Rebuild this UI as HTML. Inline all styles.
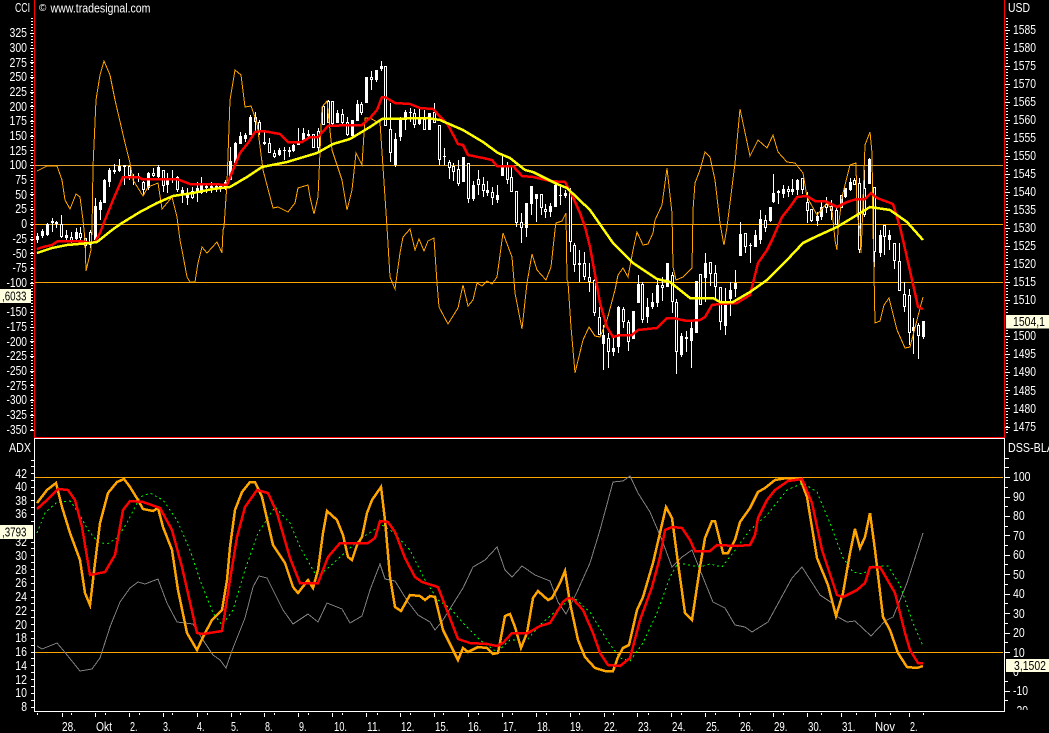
<!DOCTYPE html>
<html><head><meta charset="utf-8"><title>Chart</title>
<style>html,body{margin:0;padding:0;background:#000;overflow:hidden}svg{display:block}text{font-family:"Liberation Sans",sans-serif;font-size:13px;fill:#fff}</style></head>
<body>
<svg width="1049" height="733" viewBox="0 0 1049 733" xmlns="http://www.w3.org/2000/svg">
<rect width="1049" height="733" fill="#000"/>
<g shape-rendering="crispEdges">
<path d="M35 165.5H1003" stroke="#e0a030" fill="none"/>
<path d="M35 224.5H1003M35 282.5H1003M35 477.5H1003M35 652.5H1003" stroke="#ffa500" fill="none"/>
<!-- wicks -->
<path stroke="#fff" fill="none" d="M37.5 233V243M42.5 229V238M47.5 223V236M52.5 218V232M56.5 221V228M61.5 215V238M66.5 230V240M71.5 232V243M76.5 228V240M80.5 227V242M85.5 238V257M90.5 230V248M95.5 198V240M100.5 200V220M104.5 179V203M109.5 168V187M114.5 164V174M119.5 159V172M124.5 165V185M129.5 165V180M133.5 174V185M138.5 173V182M143.5 181V195M148.5 172V190M153.5 168V177M158.5 165V178M163.5 170V192M167.5 173V193M172.5 170V183M177.5 176V192M182.5 187V203M187.5 188V205M192.5 187V199M197.5 182V202M201.5 177V194M206.5 183V193M211.5 182V193M216.5 183V192M220.5 185V192M225.5 180V190M230.5 147V180M235.5 142V163M240.5 132V144M245.5 133V142M250.5 115V135M255.5 112V132M259.5 120V135M264.5 132V145M269.5 138V153M274.5 150V158M279.5 148V156M284.5 147V160M289.5 147V157M293.5 144V152M298.5 128V145M303.5 128V140M308.5 130V138M313.5 134V148M318.5 128V151M323.5 105V125M328.5 100V123M332.5 101V125M337.5 110V123M342.5 109V124M347.5 117V136M352.5 120V136M357.5 100V121M361.5 102V115M366.5 77V103M371.5 71V90M376.5 70V82M381.5 61V71M385.5 66V126M390.5 103V162M395.5 133V167M400.5 117V141M405.5 110V130M410.5 108V122M414.5 109V128M419.5 109V125M424.5 110V130M429.5 113V130M434.5 103V123M439.5 125V165M444.5 148V165M449.5 160V179M453.5 163V181M458.5 160V186M463.5 157V182M468.5 163V203M473.5 181V201M478.5 170V195M483.5 177V197M487.5 181V196M492.5 187V205M497.5 185V203M502.5 155V176M507.5 162V184M511.5 167V192M516.5 191V227M521.5 213V243M526.5 203V237M531.5 186V215M536.5 194V222M541.5 194V215M545.5 204V218M550.5 203V217M555.5 182V207M560.5 186V205M565.5 190V198M570.5 188V252M574.5 243V272M579.5 250V282M584.5 252V280M589.5 263V292M594.5 279V316M599.5 307V335M603.5 325V370M608.5 333V368M613.5 338V356M618.5 306V353M623.5 307V328M628.5 320V351M633.5 311V339M638.5 275V303M642.5 282V323M647.5 298V323M652.5 293V309M657.5 280V307M662.5 277V301M667.5 263V287M672.5 272V313M676.5 299V374M681.5 333V357M686.5 331V352M691.5 320V368M696.5 281V333M700.5 274V305M705.5 253V302M710.5 262V286M715.5 265V298M720.5 287V330M725.5 288V335M730.5 282V316M735.5 270V297M740.5 222V256M745.5 233V253M750.5 243V263M755.5 230V247M760.5 210V244M765.5 215V232M770.5 207V222M773.5 174V203M778.5 190V204M783.5 185V198M788.5 186V197M792.5 179V195M797.5 179V195M802.5 178V194M807.5 192V223M811.5 209V222M817.5 212V226M821.5 202V220M826.5 197V213M831.5 200V220M836.5 208V225M841.5 195V208M845.5 188V198M850.5 178V191M854.5 178V185M859.5 178V253M864.5 170V217M869.5 158V184M874.5 187V267M880.5 230V257M884.5 225V255M889.5 230V250M894.5 243V269M899.5 243V291M904.5 282V312M909.5 289V345M913.5 318V354M918.5 323V359M923.5 321V339"/>
<!-- hollow bodies -->
<path stroke="#fff" fill="#000" d="M60.5 224.5h2V236.5h-2zM70.5 237.5h2V240.5h-2zM79.5 233.5h2V237.5h-2zM84.5 238.5h2V245.5h-2zM89.5 232.5h2V244.5h-2zM128.5 166.5h2V175.5h-2zM142.5 182.5h2V189.5h-2zM152.5 173.5h2V175.5h-2zM162.5 170.5h2V185.5h-2zM176.5 177.5h2V189.5h-2zM191.5 191.5h2V197.5h-2zM254.5 117.5h2V121.5h-2zM258.5 122.5h2V131.5h-2zM268.5 143.5h2V152.5h-2zM273.5 153.5h2V156.5h-2zM312.5 134.5h2V147.5h-2zM317.5 131.5h2V147.5h-2zM322.5 106.5h2V124.5h-2zM327.5 101.5h2V122.5h-2zM331.5 101.5h2V123.5h-2zM341.5 114.5h2V122.5h-2zM346.5 122.5h2V134.5h-2zM360.5 104.5h2V112.5h-2zM370.5 77.5h2V79.5h-2zM384.5 66.5h2V125.5h-2zM389.5 129.5h2V152.5h-2zM413.5 113.5h2V124.5h-2zM423.5 119.5h2V129.5h-2zM433.5 112.5h2V122.5h-2zM438.5 125.5h2V159.5h-2zM448.5 162.5h2V167.5h-2zM452.5 166.5h2V171.5h-2zM457.5 169.5h2V183.5h-2zM467.5 163.5h2V198.5h-2zM477.5 179.5h2V184.5h-2zM482.5 184.5h2V190.5h-2zM491.5 192.5h2V197.5h-2zM506.5 165.5h2V179.5h-2zM510.5 177.5h2V191.5h-2zM515.5 191.5h2V222.5h-2zM520.5 222.5h2V227.5h-2zM540.5 194.5h2V207.5h-2zM544.5 209.5h2V211.5h-2zM569.5 192.5h2V241.5h-2zM573.5 245.5h2V264.5h-2zM583.5 263.5h2V276.5h-2zM588.5 277.5h2V281.5h-2zM593.5 280.5h2V312.5h-2zM598.5 317.5h2V334.5h-2zM607.5 338.5h2V351.5h-2zM622.5 309.5h2V321.5h-2zM627.5 322.5h2V341.5h-2zM641.5 284.5h2V319.5h-2zM661.5 285.5h2V287.5h-2zM671.5 275.5h2V301.5h-2zM675.5 302.5h2V351.5h-2zM685.5 337.5h2V338.5h-2zM699.5 274.5h2V304.5h-2zM709.5 262.5h2V273.5h-2zM714.5 273.5h2V286.5h-2zM719.5 287.5h2V321.5h-2zM744.5 233.5h2V246.5h-2zM764.5 220.5h2V227.5h-2zM787.5 189.5h2V191.5h-2zM801.5 178.5h2V189.5h-2zM806.5 202.5h2V210.5h-2zM810.5 209.5h2V220.5h-2zM825.5 204.5h2V207.5h-2zM830.5 206.5h2V210.5h-2zM835.5 210.5h2V224.5h-2zM840.5 195.5h2V207.5h-2zM853.5 180.5h2V184.5h-2zM858.5 183.5h2V249.5h-2zM863.5 188.5h2V214.5h-2zM873.5 187.5h2V251.5h-2zM883.5 225.5h2V236.5h-2zM893.5 243.5h2V260.5h-2zM898.5 261.5h2V290.5h-2zM903.5 294.5h2V306.5h-2zM908.5 295.5h2V332.5h-2zM917.5 325.5h2V335.5h-2z"/>
<!-- filled bodies -->
<path fill="#fff" d="M36 236h3V240h-3zM41 231h3V236h-3zM46 224h3V235h-3zM51 221h3V223h-3zM55 222h3V224h-3zM65 235h3V238h-3zM75 232h3V239h-3zM94 206h3V240h-3zM99 202h3V210h-3zM103 180h3V203h-3zM108 170h3V182h-3zM113 170h3V172h-3zM118 166h3V171h-3zM123 165h3V167h-3zM132 176h3V178h-3zM137 176h3V178h-3zM147 173h3V188h-3zM157 167h3V177h-3zM166 178h3V185h-3zM171 178h3V180h-3zM181 190h3V195h-3zM186 193h3V198h-3zM196 188h3V192h-3zM200 185h3V193h-3zM205 186h3V188h-3zM210 186h3V188h-3zM215 186h3V188h-3zM219 186h3V188h-3zM224 182h3V188h-3zM229 161h3V180h-3zM234 143h3V163h-3zM239 136h3V144h-3zM244 135h3V139h-3zM249 117h3V135h-3zM263 142h3V144h-3zM278 150h3V155h-3zM283 150h3V151h-3zM288 150h3V152h-3zM292 145h3V151h-3zM297 142h3V145h-3zM302 133h3V140h-3zM307 134h3V136h-3zM336 113h3V123h-3zM351 120h3V136h-3zM356 104h3V121h-3zM365 77h3V103h-3zM375 70h3V80h-3zM380 66h3V69h-3zM394 139h3V165h-3zM399 120h3V137h-3zM404 112h3V120h-3zM409 112h3V113h-3zM418 118h3V124h-3zM428 113h3V130h-3zM443 156h3V157h-3zM462 157h3V182h-3zM472 185h3V199h-3zM486 190h3V193h-3zM496 195h3V200h-3zM501 167h3V176h-3zM525 203h3V228h-3zM530 186h3V204h-3zM535 194h3V199h-3zM549 206h3V212h-3zM554 185h3V207h-3zM559 195h3V196h-3zM564 193h3V196h-3zM578 263h3V265h-3zM602 335h3V344h-3zM612 348h3V352h-3zM617 307h3V347h-3zM632 311h3V339h-3zM637 284h3V303h-3zM646 307h3V317h-3zM651 302h3V307h-3zM656 285h3V303h-3zM666 263h3V287h-3zM680 336h3V355h-3zM690 328h3V341h-3zM695 281h3V333h-3zM704 263h3V278h-3zM724 304h3V326h-3zM729 290h3V299h-3zM734 283h3V289h-3zM739 234h3V256h-3zM749 245h3V246h-3zM754 235h3V247h-3zM759 219h3V240h-3zM769 207h3V221h-3zM772 193h3V202h-3zM777 191h3V193h-3zM782 189h3V194h-3zM791 189h3V192h-3zM796 180h3V190h-3zM816 216h3V221h-3zM820 207h3V217h-3zM844 188h3V197h-3zM849 182h3V190h-3zM868 159h3V184h-3zM879 235h3V253h-3zM888 235h3V240h-3zM912 327h3V331h-3zM922 321h3V337h-3z"/>
<!-- CCI thin -->
<polyline fill="none" stroke="#ffa500" points="37,171 47,166 57,166 62,180 65,200 70,209 76,194 80,197 83,220 85,240 86,271 91,250 92,230 93,167 96,100 100,75 104,61 110,75 115,100 125,143 130,163 133,180 143,196 148,187 158,183 162,209 172,197 177,217 180,240 182,250 187,277 190,282 195,282 198,263 202,247 207,253 217,242 222,253 223,230 224,227 227,183 230,100 235,70 241,75 245,107 251,106 257,123 263,170 273,208 278,207 288,212 295,203 298,188 308,185 310,197 314,214 318,197 322,107 327,101 332,150 342,180 347,210 352,190 356,153 362,165 365,118 370,118 377,122 380,122 383,167 387,227 390,277 395,289 400,253 403,237 410,229 415,250 419,239 424,251 428,241 434,238 437,283 439,307 448,324 458,308 463,285 468,306 473,300 477,283 482,286 487,281 492,284 497,277 503,233 512,257 515,293 522,329 527,283 532,254 537,270 546,280 551,267 555,230 556,223 562,221 566,213 567,280 568,282 571,327 575,373 583,340 589,327 595,336 600,337 607,320 615,290 618,275 623,268 628,277 633,250 637,232 643,245 648,244 653,233 655,220 662,205 667,168 672,213 673,267 676,280 683,277 692,268 693,210 695,183 700,170 705,152 710,157 715,180 720,223 723,240 724,245 727,227 735,163 740,109 750,156 758,140 767,148 773,135 778,152 787,162 795,163 803,173 807,197 817,215 827,203 832,210 835,240 837,250 838,230 842,197 850,165 856,163 857,213 860,230 861,253 862,230 865,145 870,132 872,153 873,227 874,273 875,323 880,321 884,305 889,298 897,330 905,348 910,347 917,320 923,297"/>
<!-- red MA -->
<polyline fill="none" stroke="#ff0000" stroke-width="2.5" points="37,249 43,247 52,245 58,241 80,241 90,243 95,242 100,233 103,225 113,200 123,177 138,177 142,179 177,179 190,184 213,184 227,185 233,170 240,153 248,143 255,132 263,131 280,134 288,142 302,142 310,137 318,137 328,126 350,125 362,125 370,118 377,110 382,97 385,97 395,103 410,104 420,108 433,109 448,125 458,144 463,145 468,155 483,158 492,160 497,166 513,166 522,176 533,177 550,181 565,182 572,195 580,213 585,227 590,247 596,280 600,303 607,327 613,337 620,335 632,335 638,330 647,329 657,328 667,318 673,318 687,321 700,320 705,317 712,305 720,304 737,303 750,295 758,263 767,250 772,240 782,217 790,207 797,197 807,196 815,201 825,201 837,207 847,202 857,199 865,199 871,193 877,198 893,204 900,227 903,240 917,302 918,307 923,309"/>
<!-- yellow MA -->
<polyline fill="none" stroke="#ffff00" stroke-width="2.5" points="37,253 52,248 67,245 90,243 97,242 112,230 122,223 140,212 157,203 173,196 193,193 213,189 230,187 247,177 262,167 287,162 317,153 333,144 350,139 360,133 370,127 382,119 428,118 440,120 463,130 483,142 498,153 510,158 525,170 533,172 557,184 567,188 590,210 613,243 633,263 657,279 670,282 690,298 700,298 713,298 720,302 733,302 750,292 767,280 787,260 803,243 813,238 837,227 857,215 870,207 890,210 907,222 923,240"/>
<!-- gray -->
<polyline fill="none" stroke="#808080" points="37,646 42,649 57,643 63,650 80,671 92,669 100,658 110,627 120,602 130,588 138,582 145,584 158,579 167,603 177,622 193,624 203,640 213,655 220,660 226,668 233,648 245,618 253,587 259,576 267,578 283,610 293,624 308,614 318,622 327,603 342,609 350,623 362,616 370,590 380,564 385,579 395,581 408,602 418,615 430,622 435,630 443,620 463,588 473,567 485,560 497,547 505,570 512,577 522,566 535,575 550,581 558,602 566,614 577,592 590,563 600,530 613,482 623,481 630,476 638,493 650,512 662,540 672,567 682,557 692,550 700,570 713,602 725,608 735,625 745,627 752,632 768,622 780,600 792,578 802,567 820,595 832,603 838,617 847,622 855,621 871,636 885,621 893,617 907,583 923,533"/>
<!-- green dotted -->
<polyline fill="none" stroke="#00ff00" stroke-dasharray="2 3" points="37,533 45,513 57,502 70,501 78,512 88,530 98,542 107,544 117,538 127,523 140,497 150,493 163,500 177,520 190,550 200,580 213,613 222,625 233,610 245,570 258,533 275,507 290,523 300,547 317,577 328,568 350,548 363,537 382,525 393,532 410,550 425,580 438,600 450,608 463,623 480,640 497,652 510,640 527,640 540,625 557,610 573,597 590,612 607,640 620,658 630,661 643,643 657,613 670,577 678,563 700,567 710,564 722,567 733,553 750,530 767,515 787,490 803,483 817,492 830,523 843,558 853,572 863,574 873,566 888,566 900,585 913,623 923,646"/>
<!-- orange thick -->
<polyline fill="none" stroke="#ffa500" stroke-width="2.5" points="37,503 47,490 56,483 62,507 70,533 80,560 85,593 90,605 95,563 100,523 108,493 117,482 124,479 130,487 138,500 143,509 153,511 158,508 163,527 172,550 178,590 187,633 197,650 203,637 212,620 222,610 227,580 230,547 235,510 242,492 250,482 255,482 262,497 273,545 285,563 293,587 298,593 308,580 313,588 318,570 323,533 327,511 337,520 343,535 348,557 352,560 357,545 362,537 367,513 372,500 381,487 385,520 390,577 395,607 401,611 410,595 420,596 425,600 430,596 435,597 443,630 458,660 463,648 468,652 478,647 487,648 493,654 498,653 505,616 510,614 515,627 521,648 527,633 533,598 538,591 548,600 552,598 560,583 565,571 570,603 578,640 585,657 595,668 605,671 613,671 618,657 623,648 629,645 637,610 643,597 653,563 666,507 672,518 678,563 685,613 692,620 700,567 705,538 712,521 715,521 723,553 728,553 735,540 740,522 750,508 758,492 765,488 775,480 787,478 800,478 807,497 817,558 828,585 836,616 843,593 850,553 855,529 860,548 865,537 870,513 875,550 883,617 890,630 898,653 907,667 917,668 923,666"/>
<!-- red signal -->
<polyline fill="none" stroke="#ff0000" stroke-width="2.5" points="37,509 47,500 58,489 68,490 75,500 82,527 90,575 105,572 115,555 123,510 130,501 143,502 160,508 172,530 182,567 197,633 203,634 222,631 230,580 237,537 245,507 257,490 268,493 277,513 290,558 300,583 318,583 328,557 340,543 368,543 375,538 380,521 388,522 395,532 405,558 415,577 422,582 438,587 448,613 458,639 470,643 487,644 497,646 503,643 512,633 528,633 540,626 550,623 563,602 568,598 573,599 583,610 593,633 600,653 608,665 620,666 630,658 640,620 652,587 660,557 665,530 672,527 682,528 690,540 695,551 710,551 717,545 737,546 750,545 755,535 758,518 767,500 775,490 788,481 802,479 812,503 822,550 837,595 843,597 857,590 865,583 870,567 880,567 895,593 905,633 910,650 918,663 923,663"/>
<!-- frame -->
<rect x="0" y="712" width="1049" height="21" fill="#000"/>
<path d="M34.5 0V437M1004.5 0V437M34 437.5H1005" stroke="#ff0000" fill="none"/>
<path d="M34 438.5H1005M34.5 438V711M1004.5 438V711M34 711.5H1005" stroke="#fff" fill="none"/>
<!-- axis dots -->
<path d="M32 18V431M1007 18V433" stroke="#fff" stroke-width="2" stroke-dasharray="1 2" fill="none"/>
<path stroke="#fff" fill="none" d="M30 33.5h4M30 48.5h4M30 62.5h4M30 77.5h4M30 92.5h4M30 106.5h4M30 121.5h4M30 136.5h4M30 150.5h4M30 165.5h4M30 180.5h4M30 194.5h4M30 209.5h4M30 224.5h4M30 239.5h4M30 253.5h4M30 268.5h4M30 283.5h4M30 312.5h4M30 327.5h4M30 341.5h4M30 356.5h4M30 371.5h4M30 385.5h4M30 400.5h4M30 415.5h4M30 430.5h4M1005 30.5h5M1005 48.5h5M1005 66.5h5M1005 84.5h5M1005 102.5h5M1005 120.5h5M1005 138.5h5M1005 156.5h5M1005 174.5h5M1005 192.5h5M1005 210.5h5M1005 228.5h5M1005 246.5h5M1005 264.5h5M1005 282.5h5M1005 300.5h5M1005 336.5h5M1005 354.5h5M1005 372.5h5M1005 390.5h5M1005 408.5h5M1005 427.5h5M31 460.5h3M31 466.5h3M31 473.5h3M31 480.5h3M31 487.5h3M31 493.5h3M31 500.5h3M31 507.5h3M31 514.5h3M31 521.5h3M31 542.5h3M31 548.5h3M31 555.5h3M31 562.5h3M31 569.5h3M31 576.5h3M31 583.5h3M31 590.5h3M31 597.5h3M31 603.5h3M31 610.5h3M31 617.5h3M31 624.5h3M31 631.5h3M31 638.5h3M31 645.5h3M31 652.5h3M31 658.5h3M31 665.5h3M31 672.5h3M31 679.5h3M31 686.5h3M31 693.5h3M31 700.5h3M31 707.5h3M1005 458.5h4M1005 467.5h4M1005 477.5h5M1005 487.5h3M1005 497.5h5M1005 506.5h3M1005 516.5h5M1005 526.5h3M1005 535.5h5M1005 545.5h3M1005 555.5h5M1005 564.5h3M1005 574.5h5M1005 584.5h3M1005 594.5h5M1005 603.5h3M1005 613.5h5M1005 623.5h3M1005 633.5h5M1005 642.5h3M1005 652.5h5M1005 681.5h3M1005 691.5h5M1005 700.5h3M1005 710.5h5"/>
<!-- date ticks -->
<path stroke="#fff" fill="none" d="M62.5 713v4M95.5 713v4M129.5 713v4M163.5 713v4M197.5 713v4M231.5 713v4M264.5 713v4M298.5 713v4M332.5 713v4M366.5 713v4M400.5 713v4M434.5 713v4M468.5 713v4M502.5 713v4M536.5 713v4M570.5 713v4M604.5 713v4M637.5 713v4M671.5 713v4M705.5 713v4M739.5 713v4M773.5 713v4M807.5 713v4M841.5 713v4M875.5 713v4M909.5 713v4M37.5 713v2M71.5 713v2M105.5 713v2M139.5 713v2M172.5 713v2M207.5 713v2M240.5 713v2M274.5 713v2M308.5 713v2M342.5 713v2M377.5 713v2M410.5 713v2M443.5 713v2M478.5 713v2M512.5 713v2M546.5 713v2M579.5 713v2M613.5 713v2M648.5 713v2M681.5 713v2M715.5 713v2M750.5 713v2M783.5 713v2M821.5 713v2M856.5 713v2M890.5 713v2M923.5 713v2"/>
</g>
<!-- headers -->
<text x="15" y="12" textLength="15" lengthAdjust="spacingAndGlyphs">CCI</text>
<text x="39" y="11" style="font-size:10px">©</text>
<text x="50.5" y="12.5" textLength="100" lengthAdjust="spacingAndGlyphs">www.tradesignal.com</text>
<text x="1008" y="12" textLength="22" lengthAdjust="spacingAndGlyphs">USD</text>
<text x="9" y="452" textLength="22" lengthAdjust="spacingAndGlyphs">ADX</text>
<text x="1008" y="452" textLength="46" lengthAdjust="spacingAndGlyphs">DSS-BLA</text>
<!-- left top labels -->
<g text-anchor="end">
<text x="27" y="37" textLength="17.5" lengthAdjust="spacingAndGlyphs">325</text>
<text x="27" y="52" textLength="17.5" lengthAdjust="spacingAndGlyphs">300</text>
<text x="27" y="67" textLength="17.5" lengthAdjust="spacingAndGlyphs">275</text>
<text x="27" y="81" textLength="17.5" lengthAdjust="spacingAndGlyphs">250</text>
<text x="27" y="96" textLength="17.5" lengthAdjust="spacingAndGlyphs">225</text>
<text x="27" y="111" textLength="17.5" lengthAdjust="spacingAndGlyphs">200</text>
<text x="27" y="125" textLength="17.5" lengthAdjust="spacingAndGlyphs">175</text>
<text x="27" y="140" textLength="17.5" lengthAdjust="spacingAndGlyphs">150</text>
<text x="27" y="155" textLength="17.5" lengthAdjust="spacingAndGlyphs">125</text>
<text x="27" y="169" textLength="17.5" lengthAdjust="spacingAndGlyphs">100</text>
<text x="27" y="184" textLength="11.7" lengthAdjust="spacingAndGlyphs">75</text>
<text x="27" y="199" textLength="11.7" lengthAdjust="spacingAndGlyphs">50</text>
<text x="27" y="213" textLength="11.7" lengthAdjust="spacingAndGlyphs">25</text>
<text x="27" y="228" textLength="5.8" lengthAdjust="spacingAndGlyphs">0</text>
<text x="27" y="243" textLength="14.5" lengthAdjust="spacingAndGlyphs">-25</text>
<text x="27" y="258" textLength="14.5" lengthAdjust="spacingAndGlyphs">-50</text>
<text x="27" y="272" textLength="14.5" lengthAdjust="spacingAndGlyphs">-75</text>
<text x="27" y="287" textLength="20.5" lengthAdjust="spacingAndGlyphs">-100</text>
<text x="27" y="316" textLength="20.5" lengthAdjust="spacingAndGlyphs">-150</text>
<text x="27" y="331" textLength="20.5" lengthAdjust="spacingAndGlyphs">-175</text>
<text x="27" y="346" textLength="20.5" lengthAdjust="spacingAndGlyphs">-200</text>
<text x="27" y="360" textLength="20.5" lengthAdjust="spacingAndGlyphs">-225</text>
<text x="27" y="375" textLength="20.5" lengthAdjust="spacingAndGlyphs">-250</text>
<text x="27" y="390" textLength="20.5" lengthAdjust="spacingAndGlyphs">-275</text>
<text x="27" y="404" textLength="20.5" lengthAdjust="spacingAndGlyphs">-300</text>
<text x="27" y="419" textLength="20.5" lengthAdjust="spacingAndGlyphs">-325</text>
<text x="27" y="434" textLength="20.5" lengthAdjust="spacingAndGlyphs">-350</text>
</g>
<!-- right top labels -->
<g>
<text x="1013" y="34" textLength="23" lengthAdjust="spacingAndGlyphs">1585</text>
<text x="1013" y="52" textLength="23" lengthAdjust="spacingAndGlyphs">1580</text>
<text x="1013" y="70" textLength="23" lengthAdjust="spacingAndGlyphs">1575</text>
<text x="1013" y="88" textLength="23" lengthAdjust="spacingAndGlyphs">1570</text>
<text x="1013" y="106" textLength="23" lengthAdjust="spacingAndGlyphs">1565</text>
<text x="1013" y="124" textLength="23" lengthAdjust="spacingAndGlyphs">1560</text>
<text x="1013" y="142" textLength="23" lengthAdjust="spacingAndGlyphs">1555</text>
<text x="1013" y="160" textLength="23" lengthAdjust="spacingAndGlyphs">1550</text>
<text x="1013" y="178" textLength="23" lengthAdjust="spacingAndGlyphs">1545</text>
<text x="1013" y="196" textLength="23" lengthAdjust="spacingAndGlyphs">1540</text>
<text x="1013" y="214" textLength="23" lengthAdjust="spacingAndGlyphs">1535</text>
<text x="1013" y="232" textLength="23" lengthAdjust="spacingAndGlyphs">1530</text>
<text x="1013" y="250" textLength="23" lengthAdjust="spacingAndGlyphs">1525</text>
<text x="1013" y="268" textLength="23" lengthAdjust="spacingAndGlyphs">1520</text>
<text x="1013" y="286" textLength="23" lengthAdjust="spacingAndGlyphs">1515</text>
<text x="1013" y="304" textLength="23" lengthAdjust="spacingAndGlyphs">1510</text>
<text x="1013" y="340" textLength="23" lengthAdjust="spacingAndGlyphs">1500</text>
<text x="1013" y="358" textLength="23" lengthAdjust="spacingAndGlyphs">1495</text>
<text x="1013" y="376" textLength="23" lengthAdjust="spacingAndGlyphs">1490</text>
<text x="1013" y="395" textLength="23" lengthAdjust="spacingAndGlyphs">1485</text>
<text x="1013" y="413" textLength="23" lengthAdjust="spacingAndGlyphs">1480</text>
<text x="1013" y="431" textLength="23" lengthAdjust="spacingAndGlyphs">1475</text>
</g>
<!-- ADX labels -->
<g text-anchor="end">
<text x="27" y="478" textLength="11.7" lengthAdjust="spacingAndGlyphs">42</text>
<text x="27" y="491" textLength="11.7" lengthAdjust="spacingAndGlyphs">40</text>
<text x="27" y="505" textLength="11.7" lengthAdjust="spacingAndGlyphs">38</text>
<text x="27" y="518" textLength="11.7" lengthAdjust="spacingAndGlyphs">36</text>
<text x="27" y="546" textLength="11.7" lengthAdjust="spacingAndGlyphs">32</text>
<text x="27" y="560" textLength="11.7" lengthAdjust="spacingAndGlyphs">30</text>
<text x="27" y="574" textLength="11.7" lengthAdjust="spacingAndGlyphs">28</text>
<text x="27" y="587" textLength="11.7" lengthAdjust="spacingAndGlyphs">26</text>
<text x="27" y="601" textLength="11.7" lengthAdjust="spacingAndGlyphs">24</text>
<text x="27" y="615" textLength="11.7" lengthAdjust="spacingAndGlyphs">22</text>
<text x="27" y="629" textLength="11.7" lengthAdjust="spacingAndGlyphs">20</text>
<text x="27" y="642" textLength="11.7" lengthAdjust="spacingAndGlyphs">18</text>
<text x="27" y="656" textLength="11.7" lengthAdjust="spacingAndGlyphs">16</text>
<text x="27" y="670" textLength="11.7" lengthAdjust="spacingAndGlyphs">14</text>
<text x="27" y="684" textLength="11.7" lengthAdjust="spacingAndGlyphs">12</text>
<text x="27" y="697" textLength="11.7" lengthAdjust="spacingAndGlyphs">10</text>
<text x="27" y="711" textLength="5.8" lengthAdjust="spacingAndGlyphs">8</text>
</g>
<!-- DSS labels -->
<g>
<text x="1013" y="481" textLength="17.5" lengthAdjust="spacingAndGlyphs">100</text>
<text x="1013" y="501" textLength="11.7" lengthAdjust="spacingAndGlyphs">90</text>
<text x="1013" y="520" textLength="11.7" lengthAdjust="spacingAndGlyphs">80</text>
<text x="1013" y="540" textLength="11.7" lengthAdjust="spacingAndGlyphs">70</text>
<text x="1013" y="559" textLength="11.7" lengthAdjust="spacingAndGlyphs">60</text>
<text x="1013" y="579" textLength="11.7" lengthAdjust="spacingAndGlyphs">50</text>
<text x="1013" y="598" textLength="11.7" lengthAdjust="spacingAndGlyphs">40</text>
<text x="1013" y="618" textLength="11.7" lengthAdjust="spacingAndGlyphs">30</text>
<text x="1013" y="637" textLength="11.7" lengthAdjust="spacingAndGlyphs">20</text>
<text x="1013" y="657" textLength="11.7" lengthAdjust="spacingAndGlyphs">10</text>
<text x="1013" y="676" textLength="5.8" lengthAdjust="spacingAndGlyphs">0</text>
<text x="1013" y="695" textLength="15" lengthAdjust="spacingAndGlyphs">-10</text>
<text x="1013" y="715" textLength="15" lengthAdjust="spacingAndGlyphs">-20</text>
</g>
<rect x="1005" y="710" width="44" height="23" fill="#000"/>
<!-- date labels -->
<g>
<text x="62" y="731" textLength="14" lengthAdjust="spacingAndGlyphs">28.</text>
<text x="96" y="731" textLength="16" lengthAdjust="spacingAndGlyphs">Okt</text>
<text x="130" y="731" textLength="7.5" lengthAdjust="spacingAndGlyphs">2.</text>
<text x="163" y="731" textLength="7.5" lengthAdjust="spacingAndGlyphs">3.</text>
<text x="197" y="731" textLength="7.5" lengthAdjust="spacingAndGlyphs">4.</text>
<text x="231" y="731" textLength="7.5" lengthAdjust="spacingAndGlyphs">5.</text>
<text x="265" y="731" textLength="7.5" lengthAdjust="spacingAndGlyphs">8.</text>
<text x="299" y="731" textLength="7.5" lengthAdjust="spacingAndGlyphs">9.</text>
<text x="334" y="731" textLength="13" lengthAdjust="spacingAndGlyphs">10.</text>
<text x="367" y="731" textLength="13.5" lengthAdjust="spacingAndGlyphs">11.</text>
<text x="401" y="731" textLength="13.5" lengthAdjust="spacingAndGlyphs">12.</text>
<text x="435" y="731" textLength="13.5" lengthAdjust="spacingAndGlyphs">15.</text>
<text x="468" y="731" textLength="13.5" lengthAdjust="spacingAndGlyphs">16.</text>
<text x="503" y="731" textLength="13.5" lengthAdjust="spacingAndGlyphs">17.</text>
<text x="537" y="731" textLength="13.5" lengthAdjust="spacingAndGlyphs">18.</text>
<text x="570" y="731" textLength="13.5" lengthAdjust="spacingAndGlyphs">19.</text>
<text x="604" y="731" textLength="13.5" lengthAdjust="spacingAndGlyphs">22.</text>
<text x="638" y="731" textLength="13.5" lengthAdjust="spacingAndGlyphs">23.</text>
<text x="672" y="731" textLength="13.5" lengthAdjust="spacingAndGlyphs">24.</text>
<text x="706" y="731" textLength="13.5" lengthAdjust="spacingAndGlyphs">25.</text>
<text x="740" y="731" textLength="13.5" lengthAdjust="spacingAndGlyphs">26.</text>
<text x="774" y="731" textLength="13.5" lengthAdjust="spacingAndGlyphs">29.</text>
<text x="808" y="731" textLength="13.5" lengthAdjust="spacingAndGlyphs">30.</text>
<text x="842" y="731" textLength="13.5" lengthAdjust="spacingAndGlyphs">31.</text>
<text x="875" y="731" textLength="20" lengthAdjust="spacingAndGlyphs">Nov</text>
<text x="910" y="731" textLength="7.5" lengthAdjust="spacingAndGlyphs">2.</text>
</g>
<!-- value tags -->
<rect x="0" y="289" width="31" height="14" fill="#ffffe0"/>
<text x="2" y="300.5" textLength="24.5" lengthAdjust="spacingAndGlyphs" style="fill:#000">,6033</text>
<rect x="0" y="525" width="33" height="14" fill="#ffffe0"/>
<text x="2" y="536.5" textLength="24.5" lengthAdjust="spacingAndGlyphs" style="fill:#000">,3793</text>
<rect x="1006" y="315" width="43" height="13.5" fill="#ffffe0"/>
<text x="1013" y="326" textLength="32" lengthAdjust="spacingAndGlyphs" style="fill:#000">1504,1</text>
<rect x="1006" y="659" width="43" height="13" fill="#ffffe0"/>
<text x="1014" y="670" textLength="32" lengthAdjust="spacingAndGlyphs" style="fill:#000">3,1502</text>
</svg>
</body></html>
